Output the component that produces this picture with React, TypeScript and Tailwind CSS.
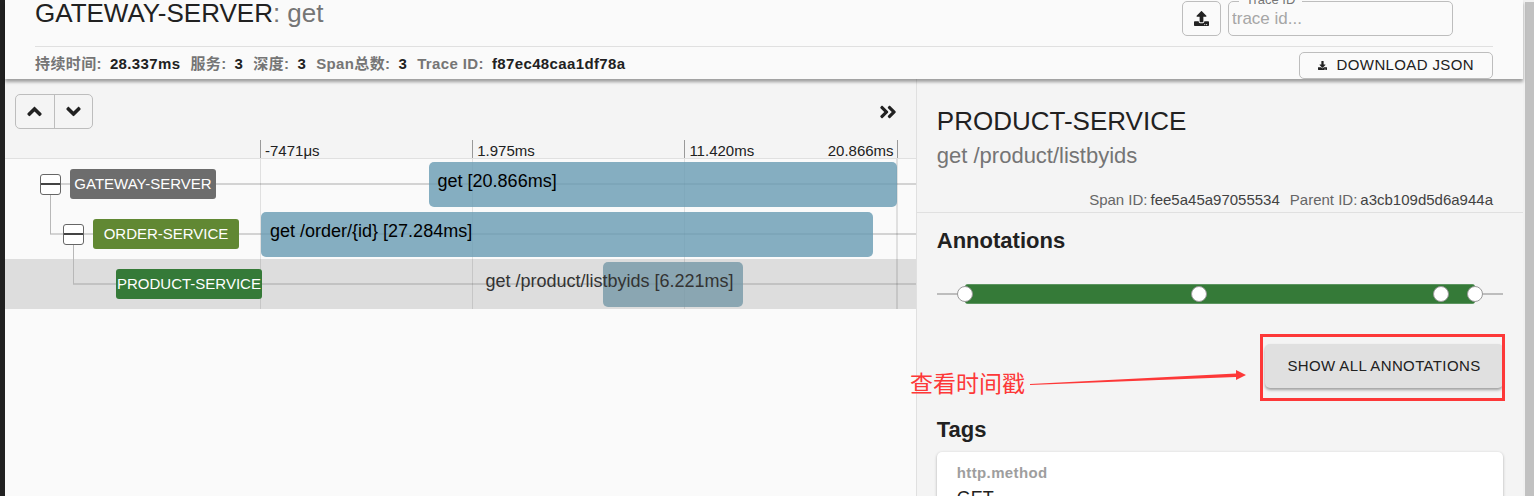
import React from 'react';
import {
  FaAngleDoubleRight,
  FaAngleDown,
  FaAngleUp,
  FaDownload,
  FaUpload
} from 'react-icons/fa';

interface Span {
  service: string;
  badgeClass: string;
  label: string;
  depth: number;
  start: number;
  duration: number;
  hasChildren: boolean;
  selected?: boolean;
}

// Times are in microseconds, relative to the root span
const TRACE_START = -7471;
const TRACE_DURATION = 28337;
const INDENT = 23;

const spans: Span[] = [
  {
    service: 'GATEWAY-SERVER',
    badgeClass: 'bg-[#6d6d6d]',
    label: 'get [20.866ms]',
    depth: 0,
    start: 0,
    duration: 20866,
    hasChildren: true
  },
  {
    service: 'ORDER-SERVICE',
    badgeClass: 'bg-[#618833]',
    label: 'get /order/{id} [27.284ms]',
    depth: 1,
    start: -7471,
    duration: 27284,
    hasChildren: true
  },
  {
    service: 'PRODUCT-SERVICE',
    badgeClass: 'bg-[#357a38]',
    label: 'get /product/listbyids [6.221ms]',
    depth: 2,
    start: 7780,
    duration: 6221,
    hasChildren: false,
    selected: true
  }
];

const traceInfo = [
  { label: '持续时间:', value: '28.337ms' },
  { label: '服务:', value: '3' },
  { label: '深度:', value: '3' },
  { label: 'Span总数:', value: '3' },
  { label: 'Trace ID:', value: 'f87ec48caa1df78a' }
];

const annotationMarks = [5, 46.3, 89.1, 95];

const TraceHeader: React.FC = () => (
  <header className="relative z-10 bg-[#fafafa] px-[30px] shadow-[0_3px_3px_rgba(0,0,0,0.35)]">
    <div className="flex h-[47px] items-start justify-between border-b border-[#e0e0e0]">
      <h1 className="text-[26px] leading-[26px]">
        GATEWAY-SERVER<span className="text-[#757575]">: get</span>
      </h1>
      <div className="mr-10 flex gap-[7px] pt-px">
        <button
          type="button"
          aria-label="Upload JSON"
          className="flex h-[35px] w-[39px] items-center justify-center rounded-[5px] border border-[#bdbdbd]"
        >
          <FaUpload className="h-[15px] w-[15px]" />
        </button>
        <div className="relative">
          <label
            htmlFor="trace-id"
            className="absolute -top-[9px] left-[11px] bg-[#fafafa] px-[7px] text-[13px] leading-4 text-[#757575]"
          >
            Trace ID
          </label>
          <input
            id="trace-id"
            type="text"
            placeholder="trace id..."
            className="h-[35px] w-[225px] rounded-[5px] border border-[#bdbdbd] px-[3px] text-[17px] placeholder:text-[#a6a6a6]"
          />
        </div>
      </div>
    </div>

    <div className="flex h-8 items-end justify-between">
      <dl className="flex h-8 items-center gap-[10px] pt-px text-[15px] leading-5 font-bold tracking-wide">
        {traceInfo.map((item) => (
          <div key={item.label} className="flex gap-2">
            <dt className="text-[#757575]">{item.label}</dt>
            <dd>{item.value}</dd>
          </div>
        ))}
      </dl>
      <button
        type="button"
        className="flex h-[27px] items-center gap-[10px] rounded-[5px] border border-[#bdbdbd] px-[18px] text-[15px] tracking-wide"
      >
        <FaDownload className="h-[9px] w-[9px]" />
        DOWNLOAD JSON
      </button>
    </div>
  </header>
);

const TimelineToolbar: React.FC = () => (
  <div className="flex h-20 flex-col justify-between border-b border-[#e0e0e0] bg-[#f4f4f4] pt-[15px]">
    <div className="flex items-center justify-between pr-[18px] pl-[10px]">
      <div className="flex h-[35px] w-[78px] divide-x divide-[#bdbdbd] rounded-[5px] border border-[#bdbdbd]">
        <button type="button" aria-label="Previous span" className="flex flex-1 items-center justify-center">
          <FaAngleUp className="h-[23px] w-[23px]" />
        </button>
        <button type="button" aria-label="Next span" className="flex flex-1 items-center justify-center">
          <FaAngleDown className="h-[23px] w-[23px]" />
        </button>
      </div>
      <button type="button" aria-label="Close detail">
        <FaAngleDoubleRight className="h-5 w-5" />
      </button>
    </div>

    {/* Time axis */}
    <div className="pr-[2%] pl-[28%]">
      <div className="grid grid-cols-3 grid-rows-[18px] border-r border-[#999] text-[15px] leading-[22px]">
        <div className="border-l border-[#999] pl-1">-7471μs</div>
        <div className="border-l border-[#999] pl-1">1.975ms</div>
        <div className="flex justify-between border-l border-[#999] pr-[3px] pl-1">
          <span>11.420ms</span>
          <span>20.866ms</span>
        </div>
      </div>
    </div>
  </div>
);

const SpanRow: React.FC<{ span: Span }> = ({ span }) => {
  const lineStart = 45 + Math.max(span.depth - 1, 0) * INDENT;
  const left = ((span.start - TRACE_START) / TRACE_DURATION) * 100;
  const width = (span.duration / TRACE_DURATION) * 100;
  const alignEnd = left > 50;

  return (
    <div className={`relative flex h-[50px] ${span.selected ? 'bg-[#dddddd]' : ''}`}>
      {/* Connectors */}
      <div
        className={`absolute top-6 right-0 h-[2px] ${span.selected ? 'bg-[#c2c2c2]' : 'bg-[#d3d3d3]'}`}
        style={{ left: lineStart }}
      />
      {span.depth > 0 && (
        <div className="absolute -top-[15px] h-10 w-px bg-[#b8b8b8]" style={{ left: lineStart }} />
      )}

      {/* Service tree */}
      <div
        className="relative z-[1] flex w-[28%] shrink-0 items-center"
        style={{ paddingLeft: 35 + span.depth * INDENT }}
      >
        {span.hasChildren ? (
          <button
            type="button"
            aria-label={`Collapse ${span.service}`}
            className="mr-[9px] flex h-[21px] w-[21px] shrink-0 items-center rounded-[3px] border border-[#666] bg-white"
          >
            <span className="h-[2px] w-full bg-[#444]" />
          </button>
        ) : (
          <span className="w-[30px] shrink-0" />
        )}
        <span
          className={`flex h-[30px] w-[146px] shrink-0 items-center justify-center rounded-[3px] text-[15px] text-white ${span.badgeClass}`}
        >
          {span.service}
        </span>
      </div>

      {/* Timeline */}
      <div className="relative grid w-[70%] grid-cols-3 divide-x divide-black/10 border-x border-black/10">
        <div />
        <div />
        <div />
        <div
          className={`absolute top-[3px] flex h-[45px] items-center rounded-[5px] px-[9px] text-[18px] leading-6 whitespace-nowrap ${
            alignEnd ? 'justify-end' : ''
          } ${span.selected ? 'bg-[#7699a8]/80 text-[#333]' : 'bg-[#689bb3]/80 text-black'}`}
          style={{ left: `${left}%`, width: `${width}%` }}
        >
          <span className="pb-[7px]">{span.label}</span>
        </div>
      </div>
    </div>
  );
};

const AnnotationBar: React.FC = () => (
  <div className="relative mt-[30px] flex h-5 items-center">
    <div className="h-[2px] w-full bg-[#bdbdbd]" />
    <div className="absolute inset-x-[5%] h-5 rounded-[3px] border-y border-[#5c9560] bg-[#357a38]" />
    {annotationMarks.map((mark) => (
      <button
        key={mark}
        type="button"
        aria-label="Annotation"
        className="absolute h-4 w-4 -translate-x-1/2 rounded-full border border-[#999] bg-white"
        style={{ left: `${mark}%` }}
      />
    ))}
  </div>
);

// Hand-drawn note that points at the annotations button
const Callout: React.FC = () => (
  <>
    <div className="pointer-events-none absolute -top-[10px] -right-[2px] -bottom-[13px] -left-[5px] border-3 border-[#fd3838]" />
    <div className="pointer-events-none absolute top-6 right-full mr-[19px] flex items-start gap-[5px] text-[#fd3838]">
      <span className="mt-1 text-[23px] leading-6 whitespace-nowrap">查看时间戳</span>
      <svg width="216" height="20" viewBox="0 0 216 20" fill="currentColor" className="shrink-0">
        <path d="M0 16 L206 5.5 L206 2 L216 7 L206 12 L206 9 L0 17 Z" />
      </svg>
    </div>
  </>
);

const SpanDetail: React.FC = () => (
  <section className="w-2/5 border-l border-[#e0e0e0] bg-[#f4f4f4]">
    <div className="border-b border-[#e0e0e0] pt-[26px] pr-[30px] pb-[2px] pl-5">
      <h2 className="text-[26px] leading-8">PRODUCT-SERVICE</h2>
      <p className="mt-[6px] text-[22px] leading-[26px] text-[#757575]">get /product/listbyids</p>
      <dl className="mt-[21px] flex justify-end gap-[10px] text-[15px] leading-5">
        <div className="flex gap-[3px]">
          <dt className="text-[#666]">Span ID:</dt>
          <dd className="text-[#424242]">fee5a45a97055534</dd>
        </div>
        <div className="flex gap-[3px]">
          <dt className="text-[#666]">Parent ID:</dt>
          <dd className="text-[#424242]">a3cb109d5d6a944a</dd>
        </div>
      </dl>
    </div>

    <div className="px-5 pt-[15px]">
      <h3 className="text-[22px] leading-[26px] font-bold">Annotations</h3>
      <AnnotationBar />
      <div className="mt-10 flex justify-end">
        <div className="relative">
          <button
            type="button"
            className="h-11 w-[238px] rounded-[5px] bg-[#e0e0e0] text-[15px] tracking-wide shadow-[0_2px_3px_rgba(0,0,0,0.35)]"
          >
            SHOW ALL ANNOTATIONS
          </button>
          <Callout />
        </div>
      </div>

      <h3 className="mt-[29px] text-[22px] leading-[26px] font-bold">Tags</h3>
      <dl className="mt-[9px] rounded-[5px] bg-white px-5 pt-[11px] pb-4 shadow-[0_1px_3px_rgba(0,0,0,0.3)]">
        <dt className="text-[15px] leading-5 font-bold tracking-wide text-[#9e9e9e]">http.method</dt>
        <dd className="mt-[3px] text-[18px] leading-6">GET</dd>
      </dl>
    </div>
  </section>
);

export default function App() {
  return (
    <div className="flex h-screen overflow-hidden bg-[#f4f4f4] font-['Liberation_Sans','Noto_Sans_CJK_SC',sans-serif] text-[#212121]">
      <div className="w-[5px] shrink-0 bg-[#212121]" />
      <div className="flex min-w-0 flex-1 flex-col">
        <TraceHeader />
        <main className="flex flex-1">
          <section className="w-3/5 bg-[#fafafa]">
            <TimelineToolbar />
            {spans.map((span) => (
              <SpanRow key={span.service} span={span} />
            ))}
          </section>
          <SpanDetail />
        </main>
      </div>
      {/* Scrollbar */}
      <div className="w-[11px] shrink-0 bg-[#f1f1f1] pt-[2px] pl-[2px]">
        <div className="h-full bg-[#c1c1c1]" />
      </div>
    </div>
  );
}
